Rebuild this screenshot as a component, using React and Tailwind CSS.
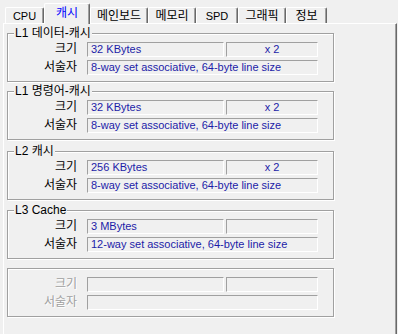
const TABS = [
  { label: 'CPU', w: 'w-[39px]', latin: true },
  { label: '캐시', w: 'w-[46px]', active: true },
  { label: '메인보드', w: 'w-[58px]' },
  { label: '메모리', w: 'w-[48px]' },
  { label: 'SPD', w: 'w-[42px]', latin: true },
  { label: '그래픽', w: 'w-[48px]' },
  { label: '정보', w: 'w-[41px]' },
]

const CACHES = [
  { title: 'L1 데이터-캐시', size: '32 KBytes', mult: 'x 2', desc: '8-way set associative, 64-byte line size', gap: 'mt-0' },
  { title: 'L1 명령어-캐시', size: '32 KBytes', mult: 'x 2', desc: '8-way set associative, 64-byte line size', gap: 'mt-[9px]' },
  { title: 'L2 캐시', size: '256 KBytes', mult: 'x 2', desc: '8-way set associative, 64-byte line size', gap: 'mt-[11px]' },
  { title: 'L3 Cache', size: '3 MBytes', mult: '', desc: '12-way set associative, 64-byte line size', gap: 'mt-[10px]' },
  { title: '', size: '', mult: '', desc: '', gap: 'mt-[9px]', disabled: true },
]

function Tab({ tab }) {
  return (
    <div
      className={`${tab.w} flex items-center justify-center rounded-t-[2px] border-t border-l border-r border-t-white border-l-white border-r-[#696969] shadow-[inset_-1px_0_0_#a0a0a0] bg-[#f0f0f0] ${
        tab.active ? 'relative z-10 h-[21px] -mb-[1px] pb-[2px] text-[#0000ff]' : 'h-[16px] text-black'
      } ${tab.latin ? 'text-[11px]' : 'text-[12px]'} leading-[14px]`}
    >
      {tab.label}
    </div>
  )
}

function Field({ className, children, center }) {
  return (
    <div
      className={`${className} h-[15px] border border-t-[#a0a0a0] border-l-[#a0a0a0] border-r-white border-b-white text-[11px] leading-[13px] text-[#1c1ca8] whitespace-nowrap overflow-hidden ${
        center ? 'text-center' : 'pl-[3px]'
      }`}
    >
      {children}
    </div>
  )
}

function Label({ children, disabled }) {
  return (
    <div
      className={`w-[70px] pr-[1px] text-right text-[12px] leading-[15px] ${
        disabled ? 'text-[#a0a0a0] [text-shadow:1px_1px_0_#fff]' : 'text-black'
      }`}
    >
      {children}
    </div>
  )
}

function CacheGroup({ cache }) {
  return (
    <div
      className={`${cache.gap} relative w-[327px] border border-[#a0a0a0] shadow-[1px_1px_0_#fff,inset_1px_1px_0_#fff] pt-[8px] pb-[6px]`}
    >
      {cache.title && (
        <div className="absolute left-[6px] -top-[8px] px-[1px] bg-[#f0f0f0] text-[12px] leading-[14px] text-black">
          {cache.title}
        </div>
      )}
      <div className="flex items-center gap-[9px]">
        <Label disabled={cache.disabled}>크기</Label>
        <div className="flex gap-[2px]">
          <Field className="w-[137px]">{cache.size}</Field>
          <Field className="w-[92px]" center>{cache.mult}</Field>
        </div>
      </div>
      <div className="mt-[3px] flex items-center gap-[9px]">
        <Label disabled={cache.disabled}>서술자</Label>
        <Field className="w-[231px]">{cache.desc}</Field>
      </div>
    </div>
  )
}

export default function App() {
  return (
    <div
      className="w-[398px] h-[334px] overflow-hidden bg-[#f0f0f0]"
      style={{ fontFamily: '"Liberation Sans", "Noto Sans CJK KR", sans-serif' }}
    >
      {/* 탭 */}
      <div className="flex items-end h-[23px] pl-[5px]">
        {TABS.map((tab) => (
          <Tab key={tab.label} tab={tab} />
        ))}
      </div>

      {/* 캐시 패널 */}
      <div className="ml-[3px] w-[394px] h-[320px] border-t border-l border-r border-t-white border-l-white border-r-[#696969] shadow-[inset_-1px_0_0_#a0a0a0] pt-[9px] pl-[3px]">
        {CACHES.map((cache, i) => (
          <CacheGroup key={i} cache={cache} />
        ))}
      </div>
    </div>
  )
}
